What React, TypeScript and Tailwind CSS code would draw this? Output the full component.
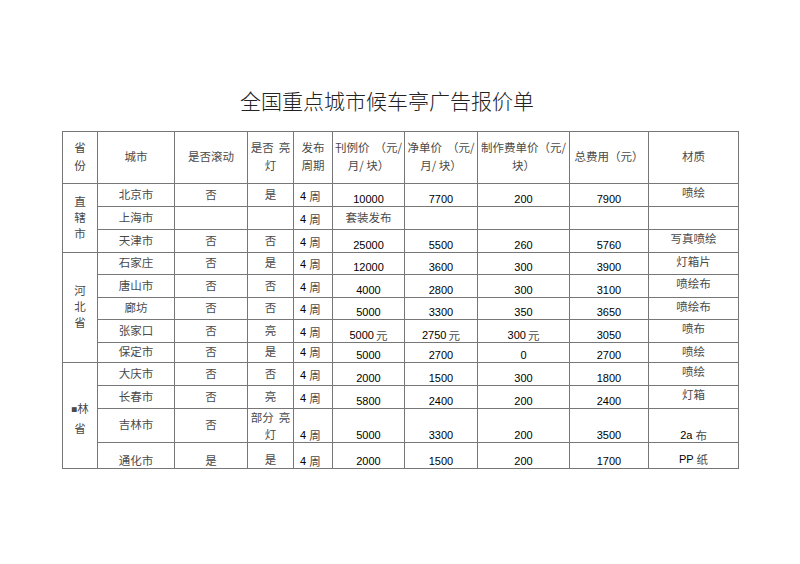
import React from 'react';

type VAlign = 'mid' | 'top' | 'bottom';

interface CellProps {
    children?: React.ReactNode;
    v?: VAlign;
    left?: boolean;
    className?: string;
}

const Cell: React.FC<CellProps> = ({ children, v = 'mid', left = false, className = '' }) => {
    const vClass = v === 'top' ? 'items-start pt-[1px]' : v === 'bottom' ? 'items-end pb-0' : 'items-center pb-[3px]';
    const hClass = left ? 'justify-start pl-[6px]' : 'justify-center';
    return (
        <div className={`bg-white flex ${vClass} ${hClass} text-[11.5px] leading-[14px] text-[#4a4a4a] font-['Noto_Sans_CJK_SC',sans-serif] ${className}`}>
            {children}
        </div>
    );
};

// latin digits in the sheet are black and crisp, the CJK parts grey
const Num: React.FC<{ children: React.ReactNode }> = ({ children }) => (
    <span className="font-['Liberation_Sans',Arial,sans-serif] text-[11px] text-black">{children}</span>
);

const Period = ({ low = false }: { low?: boolean }) => (
    <Cell v="bottom" left className={low ? 'pb-0 leading-[11px]' : 'pb-[3px]'}>
        <Num>4</Num>
        <span className="ml-[3px]">周</span>
    </Cell>
);

interface Row {
    city: string;
    scroll: string;
    light: React.ReactNode;
    price: React.ReactNode;
    net: React.ReactNode;
    make: React.ReactNode;
    total: React.ReactNode;
    material: React.ReactNode;
}

const yuan = (n: string) => (
    <>
        <Num>{n}</Num>
        <span className="ml-[2px]">元</span>
    </>
);

const groups: { province: string[]; rows: Row[] }[] = [
    {
        province: ['直', '辖', '市'],
        rows: [
            { city: '北京市', scroll: '否', light: '是', price: '10000', net: '7700', make: '200', total: '7900', material: '喷绘' },
            { city: '上海市', scroll: '', light: '', price: 'pkg', net: '', make: '', total: '', material: '' },
            { city: '天津市', scroll: '否', light: '否', price: '25000', net: '5500', make: '260', total: '5760', material: '写真喷绘' },
        ],
    },
    {
        province: ['河', '北', '省'],
        rows: [
            { city: '石家庄', scroll: '否', light: '是', price: '12000', net: '3600', make: '300', total: '3900', material: '灯箱片' },
            { city: '唐山市', scroll: '否', light: '否', price: '4000', net: '2800', make: '300', total: '3100', material: '喷绘布' },
            { city: '廊坊', scroll: '否', light: '否', price: '5000', net: '3300', make: '350', total: '3650', material: '喷绘布' },
            { city: '张家口', scroll: '否', light: '亮', price: yuan('5000'), net: yuan('2750'), make: yuan('300'), total: '3050', material: '喷布' },
            { city: '保定市', scroll: '否', light: '是', price: '5000', net: '2700', make: '0', total: '2700', material: '喷绘' },
        ],
    },
    {
        province: ['▪林', '省'],
        rows: [
            { city: '大庆市', scroll: '否', light: '否', price: '2000', net: '1500', make: '300', total: '1800', material: '喷绘' },
            { city: '长春市', scroll: '否', light: '亮', price: '5800', net: '2400', make: '200', total: '2400', material: '灯箱' },
            { city: '吉林市', scroll: '否', light: 'part', price: '5000', net: '3300', make: '200', total: '3500', material: 'cloth' },
            { city: '通化市', scroll: '是', light: '是', price: '2000', net: '1500', make: '200', total: '1700', material: 'pp' },
        ],
    },
];

const NumCell = ({ value }: { value: React.ReactNode }) => {
    if (value === '') return <Cell />;
    return (
        <Cell v="bottom" className="leading-[9px]">
            {typeof value === 'string' ? <Num>{value}</Num> : value}
        </Cell>
    );
};

const Header = () => (
    <>
        <Cell className="flex-col !items-center justify-center leading-[18px] pb-0">
            <span>省</span>
            <span>份</span>
        </Cell>
        <Cell className="pb-0">城市</Cell>
        <Cell className="pb-0">是否滚动</Cell>
        <Cell className="flex-col !items-center justify-center leading-[18px] pb-0">
            <span>是否&nbsp;&nbsp;亮</span>
            <span>灯</span>
        </Cell>
        <Cell className="flex-col !items-center justify-center leading-[18px] pb-0">
            <span>发布</span>
            <span>周期</span>
        </Cell>
        <Cell className="flex-col !items-center justify-center leading-[18px] pb-0">
            <span className="whitespace-nowrap">刊例价&nbsp;&nbsp;（元/</span>
            <span>月/ 块）</span>
        </Cell>
        <Cell className="flex-col !items-center justify-center leading-[18px] pb-0">
            <span className="whitespace-nowrap">净单价&nbsp;&nbsp;（元/</span>
            <span>月/ 块）</span>
        </Cell>
        <Cell className="flex-col !items-center justify-center leading-[18px] pb-0">
            <span className="whitespace-nowrap">制作费单价（元/</span>
            <span>块）</span>
        </Cell>
        <Cell className="pb-0">总费用（元）</Cell>
        <Cell className="pb-0">材质</Cell>
    </>
);

const spanClass = [
    'row-span-3 leading-[16px]',
    'row-span-5 leading-[16px]',
    'row-span-4 leading-[18px] pt-[8px]',
];

export default function App() {
    return (
        <div className="min-h-screen w-full bg-white pt-[86px]">
            <div className="ml-[62px] w-[677px] pr-[27px] text-center text-[21px] leading-[28px] font-light text-[#222] font-['Noto_Sans_CJK_SC',sans-serif]">
                全国重点城市候车亭广告报价单
            </div>
            <div className="ml-[62px] mt-[17px] grid w-fit gap-px border border-[#777] bg-[#777] grid-cols-[34px_76px_72px_45px_38px_71px_72px_91px_78px_89px] grid-rows-[51px_22px_22px_22px_21px_22px_21px_22px_19px_22px_22px_33px_25px]">
                <Header />
                {groups.map((g, gi) => (
                    <React.Fragment key={gi}>
                        <Cell className={`${spanClass[gi]} flex-col !items-center justify-center pb-0`}>
                            {g.province.map((ch) => (
                                <span key={ch}>
                                    {ch.startsWith('▪') ? (
                                        <>
                                            <span className="text-[6px] align-middle">■</span>
                                            {ch.slice(1)}
                                        </>
                                    ) : (
                                        ch
                                    )}
                                </span>
                            ))}
                        </Cell>
                        {g.rows.map((r) => {
                            const tall = r.light === 'part';
                            const last = r.material === 'pp';
                            const zhCell = tall ? 'pb-0' : '';
                            return (
                                <React.Fragment key={r.city}>
                                    {last ? (
                                        <>
                                            <Cell v="bottom" className="pb-[1px]">{r.city}</Cell>
                                            <Cell v="bottom" className="pb-[1px]">{r.scroll}</Cell>
                                            <Cell v="bottom" className="pb-[2px]">{r.light}</Cell>
                                        </>
                                    ) : (
                                        <>
                                            <Cell className={zhCell}>{r.city}</Cell>
                                            <Cell className={zhCell}>{r.scroll}</Cell>
                                            {tall ? (
                                                <Cell v="top" className="flex-col !items-center leading-[17px] pt-0">
                                                    <span>部分&nbsp;&nbsp;亮</span>
                                                    <span>灯</span>
                                                </Cell>
                                            ) : (
                                                <Cell>{r.light}</Cell>
                                            )}
                                        </>
                                    )}
                                    <Period low={tall || last} />
                                    {r.price === 'pkg' ? <Cell>套装发布</Cell> : <NumCell value={r.price} />}
                                    <NumCell value={r.net} />
                                    <NumCell value={r.make} />
                                    <NumCell value={r.total} />
                                    {r.material === 'cloth' ? (
                                        <Cell v="bottom" className="pb-0 leading-[11px]">
                                            <Num>2a</Num>
                                            <span className="ml-[3px]">布</span>
                                        </Cell>
                                    ) : last ? (
                                        <Cell v="bottom" className="pb-[2px]">
                                            <Num>PP</Num>
                                            <span className="ml-[3px]">纸</span>
                                        </Cell>
                                    ) : (
                                        <Cell v="top" className="pt-[1px]">{r.material}</Cell>
                                    )}
                                </React.Fragment>
                            );
                        })}
                    </React.Fragment>
                ))}
            </div>
        </div>
    );
}
